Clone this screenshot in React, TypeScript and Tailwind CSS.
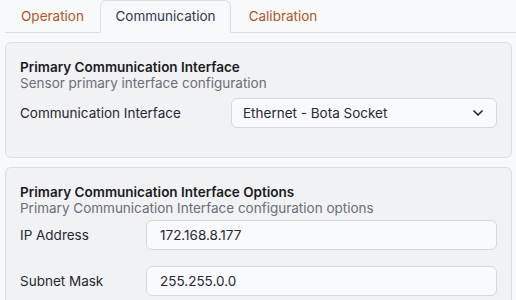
import React from "react";
import { ChevronDown } from "lucide-react";

const font = { fontFamily: "Inter, 'Open Sans', sans-serif" };

export default function App() {
  return (
    <div className="w-[516px] h-[300px] overflow-hidden bg-[#f8f9fb] text-[13.5px]" style={font}>
      <div className="ml-[5px] flex h-[33px] border-b border-[#dcdee2]">
        <div className="-mb-px flex h-[33px] w-[95px] items-center justify-center border border-transparent text-[#b0561f]">Operation</div>
        <div className="-mb-px flex h-[33px] w-[131px] items-center justify-center rounded-t-md border border-[#dcdee2] border-b-[#f8f9fb] bg-[#f8f9fb] text-[#2f3a4a]">Communication</div>
        <div className="-mb-px flex h-[33px] w-[104px] items-center justify-center border border-transparent text-[#b0561f]">Calibration</div>
      </div>

      <div className="ml-[5px] mr-[4px] mt-[9px] rounded-md border border-[#dcdde0] bg-[#f1f2f4] px-[14px] pt-[16px] pb-[29px]">
        <div className="font-semibold leading-[16px] text-[#1a1b22]">Primary Communication Interface</div>
        <div className="leading-[17px] text-[#6b6e76]">Sensor primary interface configuration</div>
        <div className="mt-[6px] flex items-center">
          <div className="w-[211px] text-[#262832]">Communication Interface</div>
          <div className="flex h-[30px] flex-1 items-center justify-between rounded-md border border-[#d5d7db] bg-[#f9fafb] pl-[11px] pr-[10px] text-[#262832]">
            <span>Ethernet - Bota Socket</span>
            <ChevronDown size={16} strokeWidth={2.6} className="text-[#2a2c33]" />
          </div>
        </div>
      </div>

      <div className="ml-[5px] mr-[4px] mt-[9px] rounded-md border border-[#dcdde0] bg-[#f1f2f4] px-[14px] pt-[16px] pb-[20px]">
        <div className="font-semibold leading-[16px] text-[#1a1b22]">Primary Communication Interface Options</div>
        <div className="leading-[17px] text-[#6b6e76]">Primary Communication Interface configuration options</div>
        <div className="mt-[3px] flex items-center">
          <div className="w-[126px] text-[#262832]">IP Address</div>
          <div className="flex h-[30px] flex-1 items-center rounded-md border border-[#d5d7db] bg-[#f9fafb] pl-[13px] text-[#262832]">172.168.8.177</div>
        </div>
        <div className="mt-[16px] flex items-center">
          <div className="w-[126px] text-[#262832]">Subnet Mask</div>
          <div className="flex h-[30px] flex-1 items-center rounded-md border border-[#d5d7db] bg-[#f9fafb] pl-[13px] text-[#262832]">255.255.0.0</div>
        </div>
      </div>
    </div>
  );
}
